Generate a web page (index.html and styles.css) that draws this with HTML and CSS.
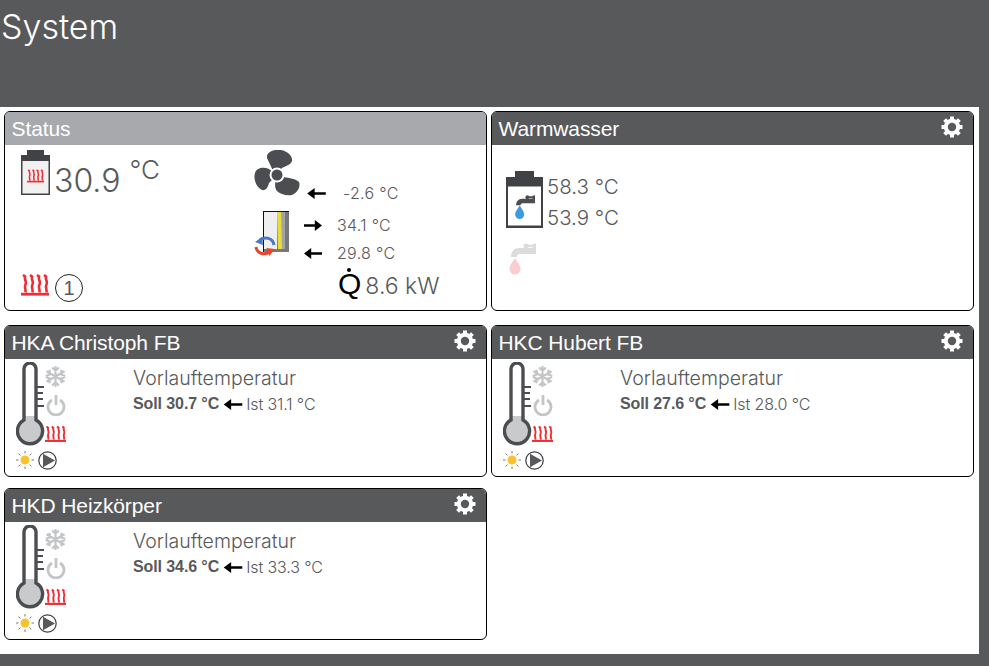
FILE: index.html
```html
<!DOCTYPE html>
<html>
<head>
	<meta charset="utf-8">
	<title>System</title>
	<link rel="stylesheet" href="styles.css">
</head>
<body>
<svg class="defs" xmlns="http://www.w3.org/2000/svg">
	<symbol id="heat" viewBox="0 0 28 22">
		<path d="M2 1l2 1.500c-1 3 2 5 .5 8s.5 4 0 8M9 1l2 1.500c-1 3 2 5 .5 8s.5 4 0 8M16 1l2 1.500c-1 3 2 5 .5 8s.5 4 0 8M23 1l2 1.500c-1 3 2 5 .5 8s.5 4 0 8" fill="none" stroke="#ee2e34" stroke-width="2.600"/>
		<rect x="0" y="18.800" width="28" height="2.800" fill="#ee2e34"/>
	</symbol>
	<symbol id="gear" viewBox="0 0 22 22">
		<circle cx="11" cy="11" r="6.200" fill="none" stroke="#fff" stroke-width="4"/>
		<path d="M11 0.500v21M0.500 11h21M3.600 3.600l14.800 14.800M18.400 3.600L3.600 18.400" stroke="#fff" stroke-width="4" stroke-dasharray="3.600 13.800"/>
	</symbol>
	<symbol id="arrow" viewBox="0 0 20 14">
		<path d="M0 7l8-6v4.600h12v2.800H8V13z" fill="#000"/>
	</symbol>
	<symbol id="snow" viewBox="0 0 22 22">
		<path d="M11 0v22M1.500 5.500l19 11M20.500 5.500l-19 11M7.500 1.500l3.500 3.500 3.500-3.500M7.500 20.500l3.500-3.500 3.500 3.500M.8 10.500l4.700-1.700-1-4.800M21.200 11.500l-4.700 1.700 1 4.800M21.200 10.500l-4.700-1.700 1-4.800M.8 11.500l4.700 1.700-1 4.800" fill="none" stroke="#c4c5c7" stroke-width="2.300"/>
	</symbol>
	<symbol id="power" viewBox="0 0 20 22">
		<path d="M6 6a8 8 0 1 0 8 0" fill="none" stroke="#c4c5c7" stroke-width="2.800"/>
		<path d="M10 1v10" stroke="#c4c5c7" stroke-width="2.800"/>
	</symbol>
	<symbol id="thermo" viewBox="0 0 30 85">
		<path d="M8 54h12v4a12.600 12.600 0 1 1-12 0z" fill="#c9cacc"/>
		<path d="M8 58V7a6 6 0 0 1 12 0v51a12.600 12.600 0 1 1-12 0z" fill="none" stroke="#4c4d50" stroke-width="3.400"/>
		<path d="M21 25h7M21 31h6M21 37h6M21 44h7" stroke="#4c4d50" stroke-width="2"/>
	</symbol>
	<symbol id="sun" viewBox="0 0 18 18">
		<circle cx="9" cy="9" r="4.500" fill="#f9c22e"/>
		<path d="M9 0v2.500M9 15.500V18M0 9h2.500M15.500 9H18M2.600 2.600l1.800 1.800M13.600 13.600l1.800 1.800M15.400 2.600l-1.800 1.800M4.400 13.600l-1.800 1.800" stroke="#77787a" stroke-width="1"/>
	</symbol>
	<symbol id="pump" viewBox="0 0 19 19">
		<circle cx="9.500" cy="9.500" r="8.700" fill="#fff" stroke="#3c3d40" stroke-width="1.200"/>
		<path d="M5 2.700L17 9.500 5 16.300z" fill="#58595b"/>
	</symbol>
	<symbol id="tap" viewBox="0 0 25 14">
		<path d="M14 3h11" stroke="currentColor" stroke-width="2.400"/>
		<circle cx="15" cy="3" r="2.600" fill="currentColor"/>
		<circle cx="24" cy="3" r="2.600" fill="currentColor"/>
		<path d="M0 14c0-5 3-9 8-9h17v6H9c-2 0-3 1-3 3z" fill="currentColor"/>
	</symbol>
</svg>

<div class="top">
	<h1>System</h1>
</div>
<div class="content">
	<div class="row row-status">
		<div class="card">
			<div class="head head-off"><span>Status</span></div>
			<div class="status">
				<div class="status-left">
					<div class="boiler-row">
						<svg class="boiler" viewBox="0 0 29 45">
							<path d="M6 0h17v5h6v40H0V5h6z" fill="#414246"/>
							<rect x="1.500" y="11" width="26" height="32.500" fill="#f1f1f2"/>
							<use href="#heat" x="6" y="19" width="17" height="14"/>
						</svg>
						<span class="big">30.9</span>
						<span class="unit">°C</span>
					</div>
					<div class="mode-row">
						<svg class="heat-big"><use href="#heat"/></svg>
						<span class="circle">1</span>
					</div>
				</div>
				<div class="status-right">
					<div class="fan-row">
						<svg class="fan" viewBox="0 0 46 46">
							<path d="M21 25L13 8C12 2 20-1 27 0 34 1 39 7 38 11 37 15 31 16 28 18z" fill="#4c4d50"/>
							<path d="M23 25L15 19C10 17 3 17 1 23-1 30 3 38 8 40 12 41 14 37 15 33z" fill="#4c4d50"/>
							<path d="M23 25L30 27C35 28 42 29 45 32 47 37 43 43 38 45 32 46 26 44 23 41 20 37 21 33 23 25z" fill="#4c4d50"/>
							<circle cx="23" cy="25" r="7.500" fill="#fff"/>
							<circle cx="23" cy="25" r="5.500" fill="#4c4d50"/>
						</svg>
						<svg class="arrow arrow-fan"><use href="#arrow"/></svg>
						<span class="small outside">-2.6 °C</span>
					</div>
					<div class="wall-row">
						<svg class="wall" viewBox="0 0 36 47">
							<rect x="9" y="0" width="26" height="41" fill="#77787a"/>
							<rect x="27" y="1" width="4" height="37" fill="#a3a4a6"/>
							<path d="M10 1h13v37H10z" fill="#efeff0"/>
							<path d="M23 1h4l1 37h-4z" fill="#e8dd3a"/>
							<path d="M9 0h26v1H10v40H9z" fill="#111"/>
							<path d="M20 34C19 27 11 25 6 29" fill="none" stroke="#4a78c8" stroke-width="3"/>
							<path d="M1 31l7-5 1 8z" fill="#4a78c8"/>
							<path d="M2 36c1 7 10 9 14 4" fill="none" stroke="#ee4326" stroke-width="3"/>
							<path d="M20.500 38l-8-1 3 8z" fill="#ee4326"/>
						</svg>
						<div class="flow">
							<div class="flow-line">
								<svg class="arrow arrow-right"><use href="#arrow"/></svg>
								<span class="small">34.1 °C</span>
							</div>
							<div class="flow-line">
								<svg class="arrow"><use href="#arrow"/></svg>
								<span class="small">29.8 °C</span>
							</div>
						</div>
					</div>
					<div class="power-row">
						<span class="qdot">Q</span>
						<span class="kw">8.6 kW</span>
					</div>
				</div>
			</div>
		</div>
		<div class="card">
			<div class="head">
				<span>Warmwasser</span>
				<svg class="gear"><use href="#gear"/></svg>
			</div>
			<div class="water">
				<div class="water-row">
					<svg class="tank" viewBox="0 0 37 57">
						<path d="M9 0h19v6h9v51H0V6h9z" fill="#414246"/>
						<rect x="2" y="15.500" width="33" height="39" fill="#fff"/>
						<use href="#tap" x="10" y="24" width="19" height="10.600" color="#4c4d50"/>
						<path d="M13.700 34.500c3 4.500 4.500 6.500 4.500 9a4.500 4.500 0 0 1-9 0c0-2.500 1.500-4.500 4.500-9z" fill="#3d9bdc"/>
					</svg>
					<div class="water-temps">
						<span>58.3 °C</span>
						<span>53.9 °C</span>
					</div>
				</div>
				<svg class="tap-off" viewBox="0 0 27 33">
					<use href="#tap" x="2" y="0" width="25" height="14" color="#dcdcdd"/>
					<path d="M6 15c3 5 5.500 8 5.500 11a5.500 5.500 0 0 1-11 0c0-3 2.500-6 5.500-11z" fill="#fbccd0"/>
				</svg>
			</div>
		</div>
	</div>

	<div class="row row-circuit">
		<div class="card">
			<div class="head">
				<span>HKA Christoph FB</span>
				<svg class="gear"><use href="#gear"/></svg>
			</div>
			<div class="circuit">
				<div class="symbols">
					<div class="symbols-top">
						<svg class="thermo"><use href="#thermo"/></svg>
						<div class="modes">
							<svg class="snow"><use href="#snow"/></svg>
							<svg class="power"><use href="#power"/></svg>
							<svg class="heat"><use href="#heat"/></svg>
						</div>
					</div>
					<div class="symbols-bottom">
						<svg class="sun"><use href="#sun"/></svg>
						<svg class="pump"><use href="#pump"/></svg>
					</div>
				</div>
				<div class="flow-text">
					<div class="flow-title">Vorlauftemperatur</div>
					<div class="flow-values"><b>Soll 30.7 °C</b><svg class="arrow-small"><use href="#arrow"/></svg><span>Ist 31.1 °C</span></div>
				</div>
			</div>
		</div>
		<div class="card">
			<div class="head">
				<span>HKC Hubert FB</span>
				<svg class="gear"><use href="#gear"/></svg>
			</div>
			<div class="circuit">
				<div class="symbols">
					<div class="symbols-top">
						<svg class="thermo"><use href="#thermo"/></svg>
						<div class="modes">
							<svg class="snow"><use href="#snow"/></svg>
							<svg class="power"><use href="#power"/></svg>
							<svg class="heat"><use href="#heat"/></svg>
						</div>
					</div>
					<div class="symbols-bottom">
						<svg class="sun"><use href="#sun"/></svg>
						<svg class="pump"><use href="#pump"/></svg>
					</div>
				</div>
				<div class="flow-text">
					<div class="flow-title">Vorlauftemperatur</div>
					<div class="flow-values"><b>Soll 27.6 °C</b><svg class="arrow-small"><use href="#arrow"/></svg><span>Ist 28.0 °C</span></div>
				</div>
			</div>
		</div>
	</div>

	<div class="row row-last">
		<div class="card">
			<div class="head">
				<span>HKD Heizkörper</span>
				<svg class="gear"><use href="#gear"/></svg>
			</div>
			<div class="circuit">
				<div class="symbols">
					<div class="symbols-top">
						<svg class="thermo"><use href="#thermo"/></svg>
						<div class="modes">
							<svg class="snow"><use href="#snow"/></svg>
							<svg class="power"><use href="#power"/></svg>
							<svg class="heat"><use href="#heat"/></svg>
						</div>
					</div>
					<div class="symbols-bottom">
						<svg class="sun"><use href="#sun"/></svg>
						<svg class="pump"><use href="#pump"/></svg>
					</div>
				</div>
				<div class="flow-text">
					<div class="flow-title">Vorlauftemperatur</div>
					<div class="flow-values"><b>Soll 34.6 °C</b><svg class="arrow-small"><use href="#arrow"/></svg><span>Ist 33.3 °C</span></div>
				</div>
			</div>
		</div>
	</div>
</div>
</body>
</html>
```

FILE: styles.css
```css
html, body{
	margin: 0;
	padding: 0;
}
body{
	background: #58595b;
	font-family: "Liberation Sans", Arial, sans-serif;
	color: #58595b;
	height: 666px;
	overflow: hidden;
}
.defs{
	display: none;
}
svg{
	display: block;
	flex: none;
}
.top{
	height: 107px;
}
.top h1{
	margin: 0;
	padding: 7px 0 0 1px;
	font-family: Inter, "Liberation Sans", sans-serif;
	font-size: 34px;
	line-height: 40px;
	font-weight: 300;
	color: #fff;
}
.content{
	width: 979px;
	height: 547px;
	box-sizing: border-box;
	background: #fff;
	padding: 4px 5px 14px 4px;
}
.row{
	display: grid;
	grid-template-columns: 483px 483px;
	gap: 4px;
}
.row-status{
	height: 200px;
	margin-bottom: 14px;
}
.row-circuit{
	height: 152px;
	margin-bottom: 11px;
}
.row-last{
	height: 152px;
}
.card{
	box-sizing: border-box;
	border: 1px solid #000;
	border-radius: 6px;
	overflow: hidden;
	display: flex;
	flex-direction: column;
}
.head{
	flex: none;
	height: 33px;
	background: #58595b;
	color: #fff;
	font-size: 21px;
	line-height: 34px;
	letter-spacing: -0.1px;
	padding: 0 10px 0 6.5px;
	display: flex;
	justify-content: space-between;
}
.head-off{
	background: #a7a9ac;
}
.gear{
	width: 22px;
	height: 22px;
	margin-top: 4px;
}

/* status */
.status{
	flex: 1;
	display: flex;
	padding-left: 16px;
}
.status-left{
	width: 233px;
	flex: none;
	padding: 5px 0 8px;
	display: flex;
	flex-direction: column;
	justify-content: space-between;
}
.boiler-row{
	display: flex;
	align-items: flex-start;
}
.boiler{
	width: 29px;
	height: 45px;
}
.big{
	font-family: Inter, "Liberation Sans", sans-serif;
	font-weight: 300;
	font-size: 32px;
	line-height: 40px;
	margin: 11px 0 0 4px;
}
.unit{
	font-family: Inter, "Liberation Sans", sans-serif;
	font-weight: 300;
	font-size: 26px;
	line-height: 34px;
	margin: 3px 0 0 9px;
}
.mode-row{
	display: flex;
	gap: 6px;
}
.heat-big{
	width: 28px;
	height: 22px;
}
.circle{
	box-sizing: border-box;
	width: 28px;
	height: 28px;
	border: 1px solid #222;
	border-radius: 50%;
	text-align: center;
	font-size: 20px;
	line-height: 27px;
}
.status-right{
	flex: 1;
	padding-top: 5px;
}
.fan-row{
	display: flex;
	align-items: flex-end;
	height: 46px;
}
.fan{
	width: 46px;
	height: 46px;
}
.arrow{
	width: 18px;
	height: 13px;
}
.arrow-fan{
	width: 19px;
	margin: 0 0 -4px 7px;
}
.arrow-right{
	transform: scaleX(-1);
}
.small{
	font-family: Inter, "Liberation Sans", sans-serif;
	font-weight: 300;
	font-size: 16px;
	line-height: 20px;
	letter-spacing: 0.3px;
}
.outside{
	margin: 0 0 -7px 17px;
}
.wall-row{
	display: flex;
	margin-top: 15px;
	height: 48px;
}
.wall{
	width: 36px;
	height: 47px;
}
.flow{
	margin: 4px 0 0 14px;
	display: flex;
	flex-direction: column;
	gap: 8px;
}
.flow-line{
	display: flex;
	align-items: center;
	gap: 15px;
}
.power-row{
	display: flex;
	align-items: baseline;
	margin: 9px 0 0 84px;
}
.qdot{
	position: relative;
	font-size: 30px;
	line-height: 32px;
	color: #000;
}
.qdot:before{
	content: "";
	position: absolute;
	left: 9px;
	top: 0;
	width: 4px;
	height: 4px;
	border-radius: 50%;
	background: #000;
}
.kw{
	font-family: Inter, "Liberation Sans", sans-serif;
	font-weight: 300;
	font-size: 23px;
	margin-left: 4px;
}

/* warmwasser */
.water{
	padding: 26px 0 0 14px;
}
.water-row{
	display: flex;
	gap: 4px;
}
.tank{
	width: 37px;
	height: 57px;
}
.water-temps{
	display: flex;
	flex-direction: column;
	font-family: Inter, "Liberation Sans", sans-serif;
	font-weight: 300;
	font-size: 20.500px;
	line-height: 31px;
}
.tap-off{
	width: 27px;
	height: 33px;
	margin: 10px 0 0 3px;
}

/* heizkreise */
.circuit{
	flex: 1;
	display: flex;
	padding: 3px 0 0 11px;
}
.symbols{
	width: 117px;
	flex: none;
}
.symbols-top{
	display: flex;
}
.thermo{
	width: 30px;
	height: 85px;
}
.modes{
	display: flex;
	flex-direction: column;
	align-items: center;
	width: 21px;
	margin-left: -1px;
	padding-top: 4px;
}
.snow{
	width: 21px;
	height: 21px;
}
.power{
	width: 20px;
	height: 22px;
	margin-top: 7px;
}
.heat{
	width: 21px;
	height: 18px;
	margin-top: 9px;
}
.symbols-bottom{
	display: flex;
	gap: 4px;
	margin-top: 4px;
}
.sun{
	width: 18px;
	height: 18px;
}
.pump{
	width: 19px;
	height: 19px;
}
.flow-text{
	padding-top: 4px;
}
.flow-title{
	font-family: Inter, "Liberation Sans", sans-serif;
	font-weight: 300;
	font-size: 19.500px;
	line-height: 24px;
}
.flow-values{
	display: flex;
	align-items: center;
	font-size: 16px;
	line-height: 20px;
	letter-spacing: -0.1px;
	margin-top: 4px;
}
.flow-values b{
	font-weight: bold;
}
.flow-values span{
	font-family: Inter, "Liberation Sans", sans-serif;
	font-weight: 300;
	font-size: 16px;
}
.arrow-small{
	width: 20px;
	height: 13px;
	margin: 0 3px 0 4px;
}
```
